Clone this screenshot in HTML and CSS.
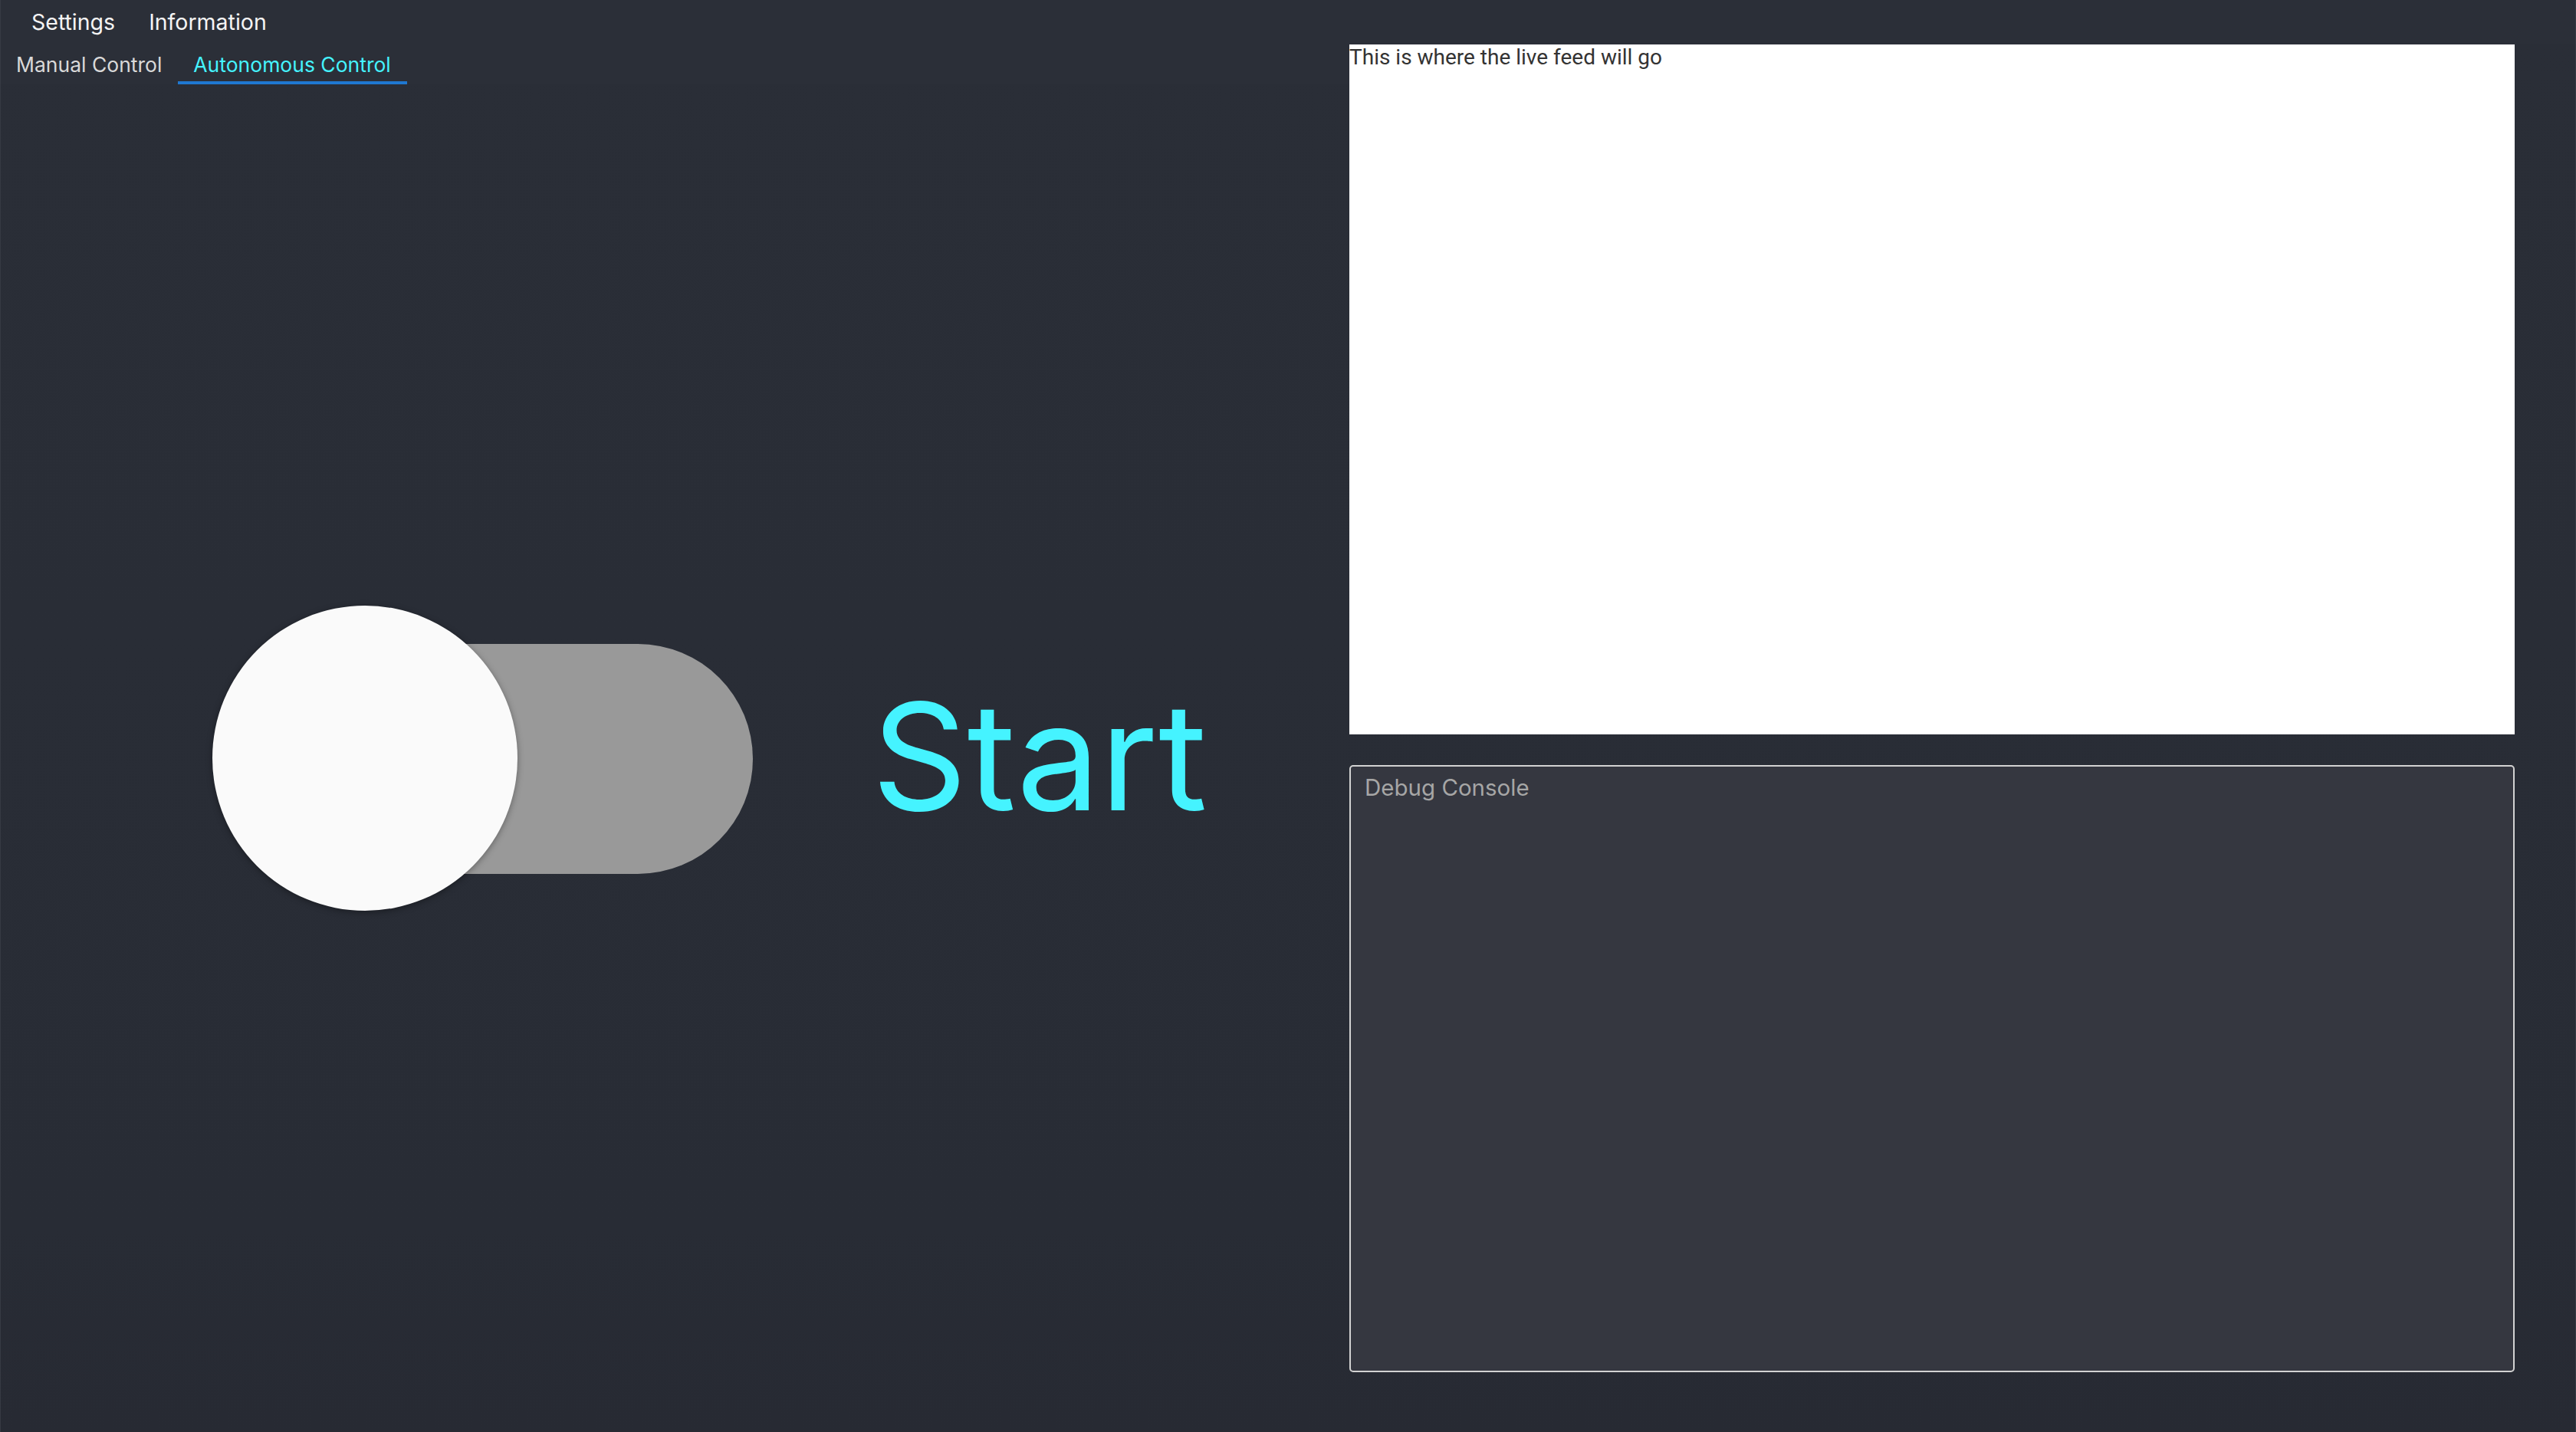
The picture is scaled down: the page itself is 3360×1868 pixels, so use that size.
FILE: index.html
```html
<!DOCTYPE html>
<html>
<head>
<meta charset="utf-8">
<link rel="stylesheet" href="styles.css">
</head>
<body>
<div class="window">
  <div class="menubar">
    <span class="menu-item">Settings</span>
    <span class="menu-item">Information</span>
  </div>
  <div class="main">
    <div class="tabs">
      <div class="tab-bar">
        <span class="tab">Manual Control</span>
        <span class="tab active">Autonomous Control</span>
      </div>
      <div class="tab-content">
        <div class="switch">
          <div class="track"></div>
          <div class="thumb"></div>
        </div>
        <div class="start">Start</div>
      </div>
    </div>
    <div class="side">
      <div class="feed">This is where the live feed will go</div>
      <div class="console">Debug Console</div>
    </div>
  </div>
</div>
</body>
</html>
```

FILE: styles.css
```css
html, body {
  margin: 0;
  padding: 0;
  background: #2b2f38;
}
.window {
  width: 3360px;
  height: 1868px;
  box-sizing: border-box;
  display: flex;
  flex-direction: column;
  background: #2b2f38;
  border-left: 1px solid #363a43;
  border-right: 1px solid #363a43;
  font-family: "Inter", "Noto Sans", sans-serif;
  overflow: hidden;
}
.menubar {
  height: 58px;
  display: flex;
  align-items: center;
  padding-left: 18px;
  padding-bottom: 2px;
  box-sizing: border-box;
  flex: none;
}
.menu-item {
  color: #f4f4f4;
  font-size: 28.5px;
  padding: 0 22px;
}
.main {
  flex: 1;
  display: flex;
  min-height: 0;
  background: linear-gradient(#2a2e37, #282c35 85%, #272a33);
}
.tabs {
  width: 1759px;
  flex: none;
  display: flex;
  flex-direction: column;
}
.tab-bar {
  height: 52px;
  display: flex;
  align-items: stretch;
  flex: none;
  background: #2b2f38;
}
.tab {
  display: flex;
  align-items: center;
  padding: 0 21px 0 20px;
  font-size: 26.5px;
  color: #d9d9d9;
  box-sizing: border-box;
  border-bottom: 4px solid transparent;
  padding-top: 4px;
}
.tab.active {
  color: #45f3ff;
  border-bottom-color: #1f78d1;
}
.tab-content {
  flex: 1;
  display: flex;
  align-items: center;
  padding-left: 276px;
}
.switch {
  position: relative;
  width: 705px;
  height: 398px;
  flex: none;
}
.track {
  position: absolute;
  left: 55px;
  top: 50px;
  width: 650px;
  height: 300px;
  border-radius: 150px;
  background: #999999;
}
.thumb {
  position: absolute;
  left: 0;
  top: 0;
  width: 398px;
  height: 398px;
  border-radius: 50%;
  background: #fafafa;
  box-shadow: 0 2px 8px rgba(0, 0, 0, 0.35);
}
.start {
  margin-left: 155px;
  font-size: 194px;
  color: #45f3ff;
  line-height: 1;
  padding-bottom: 4px;
}
.side {
  width: 1520px;
  flex: none;
  display: flex;
  flex-direction: column;
  gap: 40px;
}
.feed {
  height: 900px;
  background: #ffffff;
  color: #333333;
  font-family: "Roboto", "Liberation Sans", sans-serif;
  font-size: 28px;
  box-sizing: border-box;
  flex: none;
}
.console {
  height: 792px;
  box-sizing: border-box;
  border: 2px solid #d2d2d2;
  border-radius: 5px;
  background: #353740;
  color: #a6a6a6;
  font-size: 29.5px;
  padding: 9px 18px;
  flex: none;
}
```
